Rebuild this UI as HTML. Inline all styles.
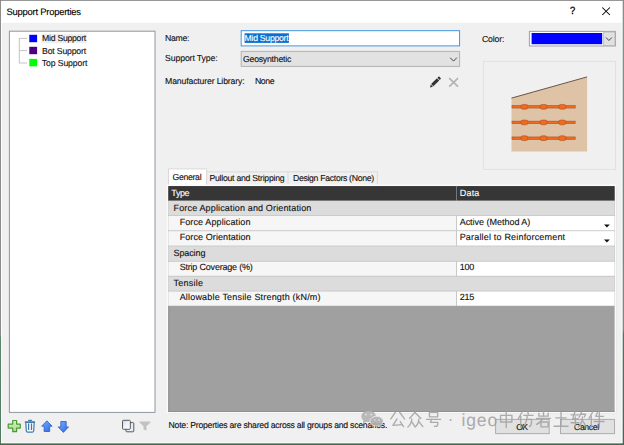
<!DOCTYPE html>
<html>
<head>
<meta charset="utf-8">
<title>Support Properties</title>
<style>
html,body{margin:0;padding:0;}
body{width:624px;height:445px;overflow:hidden;background:#f0f0f0;font-family:"Liberation Sans",sans-serif;font-size:9px;color:#111;position:relative;}
.t{position:absolute;white-space:nowrap;line-height:12px;height:12px;text-rendering:geometricPrecision;-webkit-text-stroke:0.12px currentColor;}
#shapes{position:absolute;left:0;top:0;}
</style>
</head>
<body>
<svg id="shapes" width="624" height="445" viewBox="0 0 624 445">
  <!-- window -->
  <rect x="0" y="0" width="624" height="445" fill="#f0f0f0"/>
  <rect x="0" y="0" width="623" height="22.75" fill="#ffffff"/>
  <!-- close X and ? -->
  <path d="M602.3 7.5 L609.9 15 M609.9 7.5 L602.3 15" stroke="#000" stroke-width="1.05" fill="none"/>

  <!-- list box -->
  <rect x="9.4" y="31.2" width="145.6" height="381.2" fill="#fff" stroke="#9296a0" stroke-width="1"/>
  <!-- tree lines -->
  <path d="M19.3 38.3 V63.2 M19.3 38.4 H27 M19.3 50.6 H27 M19.3 63 H27" stroke="#b4b4b4" stroke-width="0.8" fill="none"/>
  <rect x="41.5" y="33.8" width="45.5" height="9.4" fill="#efefef"/>
  <rect x="29.3" y="34.8" width="7.8" height="7.4" fill="#0000ff"/>
  <rect x="29.3" y="46.8" width="7.8" height="7.4" fill="#4b0082"/>
  <rect x="29.3" y="58.9" width="7.8" height="7.4" fill="#00ff00"/>

  <!-- name input -->
  <rect x="241.2" y="30.7" width="218.4" height="15.2" fill="#fff" stroke="#3a90e2" stroke-width="0.95"/>
  <rect x="244.6" y="33.3" width="44.3" height="9.6" fill="#0a6fd0"/>
  <!-- support type combo -->
  <rect x="241.2" y="51.4" width="218.4" height="15" fill="#e2e2e2" stroke="#b2b2b2" stroke-width="1"/>
  <path d="M450.2 57.7 L453.5 61.1 L456.8 57.7" stroke="#3c3c3c" stroke-width="0.95" fill="none"/>
  <!-- pencil -->
  <g transform="translate(430 87.4) rotate(-45)">
    <path d="M0 0 L2.6 -1.6 L2.6 1.6 Z" fill="#333"/>
    <rect x="3.2" y="-1.6" width="8.2" height="3.2" fill="#333"/>
    <rect x="12" y="-1.6" width="2.2" height="3.2" rx="0.8" fill="#333"/>
  </g>
  <!-- gray X -->
  <path d="M449.2 78.2 L458 86.6 M458 78.2 L449.2 86.6" stroke="#b2b2b2" stroke-width="1.6" fill="none"/>

  <!-- color combo -->
  <rect x="529.4" y="31.4" width="86" height="14.6" fill="#fff" stroke="#a0a0a0" stroke-width="1"/>
  <rect x="531.6" y="33" width="70.6" height="11.2" fill="#0000fe"/>
  <rect x="603.7" y="32" width="11.2" height="13.4" fill="#e1e1e1" stroke="#b5b5b5" stroke-width="0.8"/>
  <path d="M606 37.5 L608.9 40.5 L611.8 37.5" stroke="#3c3c3c" stroke-width="0.95" fill="none"/>

  <!-- preview -->
  <rect x="483.4" y="61.4" width="132.1" height="108" fill="#f0f0f0" stroke="#e2e2e2" stroke-width="1"/>
  <path d="M511.5 98.1 L587.1 76.9 L587.1 151.5 L511.5 151.5 Z" fill="#dec3a6"/>
  <path d="M511.5 98.1 L587.1 76.9" stroke="#6a5642" stroke-width="1" fill="none"/>
  <g fill="#f26a1e" stroke="#a4562a" stroke-width="0.6">
    <rect x="512" y="105.55" width="63.2" height="2.5"/>
    <rect x="512" y="121.15" width="63.2" height="2.5"/>
    <rect x="512" y="136.95" width="63.2" height="2.5"/>
    <rect x="520.90" y="104.45" width="7" height="4.7" rx="1.9"/>
    <rect x="540.10" y="104.45" width="7" height="4.7" rx="1.9"/>
    <rect x="558.80" y="104.45" width="7" height="4.7" rx="1.9"/>
    <rect x="520.90" y="120.05" width="7" height="4.7" rx="1.9"/>
    <rect x="540.10" y="120.05" width="7" height="4.7" rx="1.9"/>
    <rect x="558.80" y="120.05" width="7" height="4.7" rx="1.9"/>
    <rect x="520.90" y="135.85" width="7" height="4.7" rx="1.9"/>
    <rect x="540.10" y="135.85" width="7" height="4.7" rx="1.9"/>
    <rect x="558.80" y="135.85" width="7" height="4.7" rx="1.9"/>
  </g>

  <!-- tabs -->
  <path d="M206.6 186 V171.9 H288 V186 M288 171.9 H377.3 V186" stroke="#d9d9d9" stroke-width="1" fill="none"/>
  <path d="M168.5 186 V168.9 H206.6 V186 Z" fill="#fff" stroke="#d9d9d9" stroke-width="1"/>

  <!-- grid -->
  <rect x="167.5" y="185.3" width="447.9" height="227.3" fill="none" stroke="#fafafa" stroke-width="1.6"/>
  <rect x="616.2" y="186" width="0.7" height="227" fill="#e6e6e6"/>
  <rect x="168" y="413.2" width="449" height="0.7" fill="#e6e6e6"/>
  <rect x="168.3" y="186.1" width="446.3" height="225.8" fill="#a0a0a0"/>
  <rect x="168.3" y="306" width="1" height="105.9" fill="#8e8e8e"/><rect x="168.3" y="411" width="446.3" height="0.9" fill="#8e8e8e"/>
  <rect x="168.3" y="186.1" width="446.3" height="14.7" fill="#363636"/>
  <rect x="456" y="185.9" width="1" height="14.9" fill="#777"/>
  <!-- rows -->
  <rect x="168.3" y="200.8" width="446.3" height="105.3" fill="#c4c4c4"/>
  <rect x="168.3" y="200.8" width="446.3" height="14.3" fill="#dcdcdc"/>
  <rect x="168.3" y="215.9" width="287.8" height="14.4" fill="#f6f6f6"/>
  <rect x="457" y="215.9" width="157.6" height="14.4" fill="#fff"/>
  <rect x="168.3" y="231.2" width="287.8" height="14.4" fill="#f6f6f6"/>
  <rect x="457" y="231.2" width="157.6" height="14.4" fill="#fff"/>
  <rect x="168.3" y="246.4" width="446.3" height="14.4" fill="#dcdcdc"/>
  <rect x="168.3" y="261.7" width="287.8" height="14.1" fill="#f6f6f6"/>
  <rect x="457" y="261.7" width="157.6" height="14.1" fill="#fff"/>
  <rect x="168.3" y="276.6" width="446.3" height="14.1" fill="#dcdcdc"/>
  <rect x="168.3" y="291.5" width="287.8" height="14.1" fill="#f6f6f6"/>
  <rect x="457" y="291.5" width="157.6" height="14.1" fill="#fff"/>
  <path d="M604 224.6 H609.8 L606.9 227.4 Z M604 239.6 H609.8 L606.9 242.4 Z" fill="#111"/>

  <!-- buttons -->
  <rect x="495.6" y="419.4" width="53.6" height="14.2" fill="#e1e1e1" stroke="#adadad" stroke-width="1"/>
  <rect x="560.5" y="419.4" width="54" height="14.2" fill="#e1e1e1" stroke="#adadad" stroke-width="1"/>

  <!-- bottom-left icons -->
  <defs>
    <linearGradient id="gp" x1="0" y1="0" x2="0" y2="1"><stop offset="0" stop-color="#d4f0c0"/><stop offset="1" stop-color="#a8dc88"/></linearGradient>
    <linearGradient id="gc" x1="0" y1="0" x2="1" y2="1"><stop offset="0" stop-color="#c4d2e6"/><stop offset="0.5" stop-color="#eef3fa"/><stop offset="1" stop-color="#ffffff"/></linearGradient>
    <linearGradient id="ga" x1="0" y1="0" x2="1" y2="1"><stop offset="0" stop-color="#78b0ff"/><stop offset="1" stop-color="#2a68e4"/></linearGradient>
  </defs>
  <!-- plus -->
  <path d="M12.7 420.5 H16.6 V424.1 H20.3 V428.1 H16.6 V431.7 H12.7 V428.1 H8.2 V424.1 H12.7 Z" fill="url(#gp)" stroke="#4c9a38" stroke-width="1.2" stroke-linejoin="round"/>
  <!-- trash -->
  <path d="M25.8 422.4 H34.2 L33.7 430.8 Q33.6 432.2 32.2 432.2 H27.8 Q26.4 432.2 26.3 430.8 Z" fill="#f4f8fc" stroke="#3f7aaa" stroke-width="1.2"/>
  <path d="M24.8 422 H35.1" stroke="#3f7aaa" stroke-width="1.3" fill="none"/>
  <path d="M28.2 420.4 H32.1" stroke="#3f7aaa" stroke-width="1.2" fill="none"/>
  <path d="M28.6 423.4 V430 M31.5 423.4 V430" stroke="#3f7aaa" stroke-width="1.2" fill="none"/>
  <!-- up arrow -->
  <path d="M46.9 420.8 L52.1 426.2 H49.7 V431.5 H44.1 V426.2 H41.7 Z" fill="url(#ga)" stroke="#2a5cc4" stroke-width="0.8" stroke-linejoin="round"/>
  <!-- down arrow -->
  <path d="M63.4 432.4 L68.5 426.9 H66.2 V421.5 H60.8 V426.9 H58.2 Z" fill="url(#ga)" stroke="#2a5cc4" stroke-width="0.8" stroke-linejoin="round"/>
  <!-- copy -->
  <rect x="126" y="422.6" width="7.8" height="9.2" rx="0.9" fill="#e8eef6" stroke="#4a4a4a" stroke-width="0.9"/>
  <rect x="122.5" y="420.3" width="7.8" height="9" rx="0.9" fill="url(#gc)" stroke="#4a4a4a" stroke-width="0.9"/>
  <!-- funnel -->
  <path d="M139.5 421.4 H150.4 V422.4 L146.5 426.2 V430.6 L143.5 429.4 V426.2 L139.5 422.4 Z" fill="#c2c2c2"/>

  <!-- watermark -->
  <!-- window borders -->
  <defs>
    <linearGradient id="gl" x1="0" y1="0" x2="0" y2="1">
      <stop offset="0" stop-color="#808080"/><stop offset="0.752" stop-color="#808080"/>
      <stop offset="0.76" stop-color="#4a7a5a"/><stop offset="1" stop-color="#3d6b4f"/>
    </linearGradient>
    <linearGradient id="gr" x1="0" y1="0" x2="0" y2="1">
      <stop offset="0" stop-color="#8c8c8c"/><stop offset="0.036" stop-color="#8c8c8c"/>
      <stop offset="0.042" stop-color="#789494"/><stop offset="0.5" stop-color="#6f8888"/>
      <stop offset="0.74" stop-color="#808888"/><stop offset="0.75" stop-color="#4a7a5a"/><stop offset="1" stop-color="#3d6b4f"/>
    </linearGradient>
  </defs>
  <rect x="0.9" y="22.7" width="1.2" height="421" fill="#fbfbfb"/>
  <rect x="621.4" y="22.7" width="1.3" height="421" fill="#fbfbfb"/>
  <rect x="0.9" y="442.4" width="622" height="1.1" fill="#fbfbfb"/>
  <rect x="0" y="0" width="624" height="0.85" fill="#858585"/>
  <rect x="0" y="0" width="0.9" height="445" fill="url(#gl)"/>
  <rect x="622.7" y="0" width="1.3" height="445" fill="url(#gr)"/>
  <rect x="0" y="443.4" width="624" height="1.6" fill="#41694f"/>
</svg>
<div class="t" style="left:569.9px;top:5.4px;font-size:10.5px;color:#000;-webkit-text-stroke:0.35px #000;transform:scaleX(0.88);transform-origin:0 0">?</div>
<div class="t" style="left:6.44px;top:6.00px;font-size:9.4px;letter-spacing:-0.209px;color:#000">Support Properties</div>
<div class="t" style="left:42.08px;top:32.00px;font-size:8.7px;letter-spacing:-0.274px;color:#111">Mid Support</div>
<div class="t" style="left:42.08px;top:45.00px;font-size:8.7px;letter-spacing:-0.187px;color:#111">Bot Support</div>
<div class="t" style="left:41.78px;top:57.00px;font-size:8.7px;letter-spacing:-0.120px;color:#111">Top Support</div>
<div class="t" style="left:165.08px;top:32.00px;font-size:8.7px;letter-spacing:-0.332px;color:#111">Name:</div>
<div class="t" style="left:244.58px;top:32.00px;font-size:8.7px;letter-spacing:-0.283px;color:#fff">Mid Support</div>
<div class="t" style="left:165.08px;top:52.00px;font-size:8.7px;letter-spacing:-0.116px;color:#111">Support Type:</div>
<div class="t" style="left:242.98px;top:53.00px;font-size:8.7px;letter-spacing:-0.215px;color:#111">Geosynthetic</div>
<div class="t" style="left:165.08px;top:75.00px;font-size:8.7px;letter-spacing:-0.154px;color:#111">Manufacturer Library:</div>
<div class="t" style="left:254.88px;top:75.00px;font-size:8.7px;letter-spacing:-0.387px;color:#111">None</div>
<div class="t" style="left:481.88px;top:33.00px;font-size:8.7px;letter-spacing:-0.109px;color:#111">Color:</div>
<div class="t" style="left:172.48px;top:171.00px;font-size:8.7px;letter-spacing:-0.298px;color:#111">General</div>
<div class="t" style="left:209.48px;top:172.00px;font-size:8.7px;letter-spacing:-0.255px;color:#111">Pullout and Stripping</div>
<div class="t" style="left:292.98px;top:172.00px;font-size:8.7px;letter-spacing:-0.312px;color:#111">Design Factors (None)</div>
<div class="t" style="left:171.36px;top:187.00px;font-size:9.0px;letter-spacing:-0.463px;color:#fff">Type</div>
<div class="t" style="left:459.86px;top:187.00px;font-size:9.0px;letter-spacing:0.137px;color:#fff">Data</div>
<div class="t" style="left:173.56px;top:202.00px;font-size:9.0px;letter-spacing:0.148px;color:#111">Force Application and Orientation</div>
<div class="t" style="left:179.66px;top:216.00px;font-size:9.0px;letter-spacing:0.107px;color:#111">Force Application</div>
<div class="t" style="left:179.66px;top:231.00px;font-size:9.0px;letter-spacing:0.090px;color:#111">Force Orientation</div>
<div class="t" style="left:173.56px;top:247.00px;font-size:9.0px;letter-spacing:-0.110px;color:#111">Spacing</div>
<div class="t" style="left:179.66px;top:261.00px;font-size:9.0px;letter-spacing:-0.198px;color:#111">Strip Coverage (%)</div>
<div class="t" style="left:173.56px;top:277.00px;font-size:9.0px;letter-spacing:0.250px;color:#111">Tensile</div>
<div class="t" style="left:179.66px;top:291.00px;font-size:9.0px;letter-spacing:0.187px;color:#111">Allowable Tensile Strength (kN/m)</div>
<div class="t" style="left:459.66px;top:216.00px;font-size:9.0px;letter-spacing:-0.022px;color:#111">Active (Method A)</div>
<div class="t" style="left:459.66px;top:231.00px;font-size:9.0px;letter-spacing:0.184px;color:#111">Parallel to Reinforcement</div>
<div class="t" style="left:459.86px;top:261.00px;font-size:9.0px;letter-spacing:-0.356px;color:#111">100</div>
<div class="t" style="left:459.86px;top:291.00px;font-size:9.0px;letter-spacing:-0.356px;color:#111">215</div>
<div class="t" style="left:168.58px;top:419.00px;font-size:8.7px;letter-spacing:-0.253px;color:#111">Note: Properties are shared across all groups and scenarios.</div>
<div class="t" style="left:516.18px;top:421.00px;font-size:8.7px;letter-spacing:-0.714px;color:#111">OK</div>
<div class="t" style="left:573.98px;top:421.00px;font-size:8.7px;letter-spacing:-0.352px;color:#111">Cancel</div>
<svg style="position:absolute;left:0;top:0" width="624" height="445" viewBox="0 0 624 445">
<g id="wm" opacity="0.9">
<g fill="none" stroke="#a4a4a4" stroke-width="1.3" stroke-linecap="round" stroke-linejoin="round">
<g transform="translate(389.3 411.2) scale(1.03)"><path d="M6 1 L1.5 7.5"/><path d="M10 1 L14.8 7.5"/><path d="M7.5 7.5 L3.5 13.8 L12.6 13"/><path d="M10.6 10 L13.8 15"/></g>
<g transform="translate(407.0 411.2) scale(1.03)"><path d="M8 0.8 L2.5 7"/><path d="M8 1.5 L13.5 7"/><path d="M4.6 7.5 Q4.4 12.5 0.8 15.3"/><path d="M4.8 10.5 L7.6 14.8"/><path d="M11.6 7.5 Q11.2 12.5 8 15.3"/><path d="M11.8 10.5 L15.4 15"/></g>
<g transform="translate(425.3 411.2) scale(1.03)"><path d="M4 1 H12 V5.5 H4 Z"/><path d="M1.2 8 H14.8"/><path d="M6 8 L5 10.8 H12.2 Q12.6 15.6 9 14.6"/></g>
<g transform="translate(498.0 411.2) scale(1.03)"><path d="M2.5 4 H13.5 V10.5 H2.5 Z"/><path d="M8 0.5 V15.8"/></g>
<g transform="translate(517.0 411.2) scale(1.03)"><path d="M5 0.8 L1.2 7.5"/><path d="M3.6 5 V15.8"/><path d="M10.5 0.6 L11 2.8"/><path d="M6.5 4 H15.6"/><path d="M10 4 Q9.6 11 6 15.4"/><path d="M10 8 H14.2 Q14.2 14.8 12 14.8"/></g>
<g transform="translate(535.3 411.2) scale(1.03)"><path d="M8 0.5 V4.6"/><path d="M3.5 1.8 V4.8 H12.5 V1.8"/><path d="M1.2 7 H14.8"/><path d="M7 7 Q5.5 10.8 1.2 12.8"/><path d="M5.5 10.5 H12.5 V15.2 H5.5 Z"/></g>
<g transform="translate(552.8 411.2) scale(1.03)"><path d="M3 6.5 H13"/><path d="M8 1.2 V14.5"/><path d="M1.2 14.6 H14.8"/></g>
<g transform="translate(570.2 411.2) scale(1.03)"><path d="M0.8 3.5 H8"/><path d="M4.5 0.8 L2.5 7.6 H7.8"/><path d="M5 5.5 V15.8"/><path d="M0.8 11.2 H8.6"/><path d="M11 0.8 L8.6 6"/><path d="M10.4 3 H15 L13.8 5.6"/><path d="M12 5.5 Q11.6 12 8 15.4"/><path d="M12 9 L15.6 15.2"/></g>
<g transform="translate(588.0 411.2) scale(1.03)"><path d="M4.5 0.8 L1 7"/><path d="M3.2 4.8 V15.8"/><path d="M9 1.5 L7.6 5 H15"/><path d="M6 10 H15.6"/><path d="M11 0.8 V15.8"/></g>
</g>
<ellipse cx="368.6" cy="416.4" rx="7.3" ry="5.7" fill="#b4b4b4"/>
<path d="M363.5 420 L362.8 423.4 L367 421.6 Z" fill="#b4b4b4"/>
<ellipse cx="376.6" cy="421.2" rx="6.7" ry="4.9" fill="#b0b0b0" stroke="#f0f0f0" stroke-width="0.8"/>
<path d="M380 425 L381.8 427.2 L377.6 426 Z" fill="#b0b0b0"/>
<circle cx="366" cy="414.6" r="0.9" fill="#e6e6e6"/><circle cx="371.2" cy="414.6" r="0.9" fill="#e6e6e6"/>
<circle cx="374.8" cy="420" r="0.75" fill="#e6e6e6"/><circle cx="379" cy="420" r="0.75" fill="#e6e6e6"/>
<circle cx="450.6" cy="420" r="1.1" fill="#a6a6a6"/>
</g>
</svg>
<div class="t" style="left:461.4px;top:408px;height:24px;line-height:24px;font-size:17.5px;letter-spacing:0.9px;color:#a4a4a4;opacity:0.9;-webkit-text-stroke:0">igeo</div>
</body>
</html>
